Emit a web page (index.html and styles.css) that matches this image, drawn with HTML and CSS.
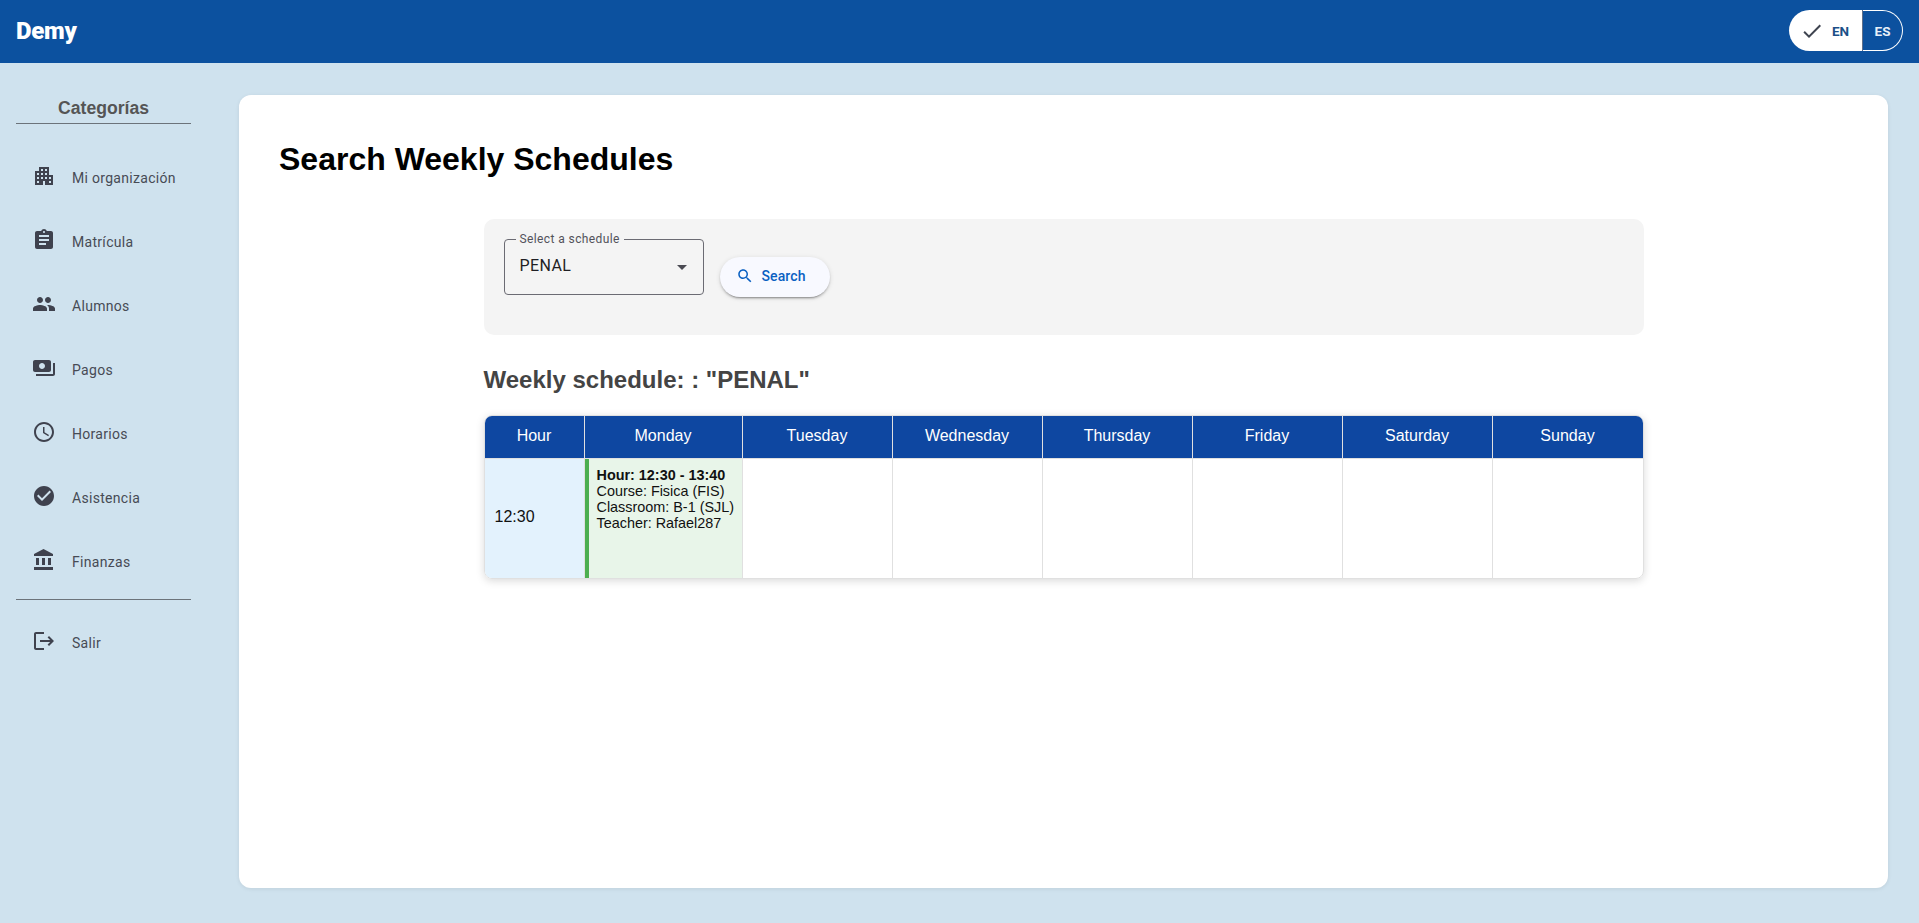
FILE: index.html
```html
<!DOCTYPE html>
<html lang="en">
<head>
  <meta charset="UTF-8">
  <title>Demy - Search Weekly Schedules</title>
  <link rel="stylesheet" href="styles.css">
</head>
<body>

<header class="topbar">
  <div class="logo">Demy</div>
  <div class="lang-toggle">
    <div class="lang-btn lang-on">
      <svg class="lang-check" viewBox="0 0 24 24"><path d="M9 16.17L4.83 12l-1.42 1.41L9 19 21 7l-1.41-1.41z"/></svg>
      <span>EN</span>
    </div>
    <div class="lang-btn lang-off">ES</div>
  </div>
</header>

<div class="layout">
  <aside class="sidebar">
    <h3 class="side-title">Categorías</h3>
    <nav class="side-list">
      <a class="side-item">
        <svg class="side-icon" viewBox="0 0 24 24"><path d="M17 11V3H7v4H3v14h8v-4h2v4h8V11h-4zM7 19H5v-2h2v2zm0-4H5v-2h2v2zm0-4H5V9h2v2zm4 4H9v-2h2v2zm0-4H9V9h2v2zm0-4H9V5h2v2zm4 8h-2v-2h2v2zm0-4h-2V9h2v2zm0-4h-2V5h2v2zm4 12h-2v-2h2v2zm0-4h-2v-2h2v2z"/></svg>
        <span>Mi organización</span>
      </a>
      <a class="side-item">
        <svg class="side-icon" viewBox="0 0 24 24"><path d="M19 3h-4.18C14.4 1.84 13.3 1 12 1c-1.3 0-2.4.84-2.82 2H5c-1.1 0-2 .9-2 2v14c0 1.1.9 2 2 2h14c1.1 0 2-.9 2-2V5c0-1.1-.9-2-2-2zm-7 0c.55 0 1 .45 1 1s-.45 1-1 1-1-.45-1-1 .45-1 1-1zm2 14H7v-2h7v2zm3-4H7v-2h10v2zm0-4H7V7h10v2z"/></svg>
        <span>Matrícula</span>
      </a>
      <a class="side-item">
        <svg class="side-icon" viewBox="0 0 24 24"><path d="M16 11c1.66 0 2.99-1.34 2.99-3S17.66 5 16 5c-1.66 0-3 1.34-3 3s1.34 3 3 3zm-8 0c1.66 0 2.99-1.34 2.99-3S9.66 5 8 5C6.34 5 5 6.34 5 8s1.34 3 3 3zm0 2c-2.33 0-7 1.17-7 3.5V19h14v-2.5c0-2.33-4.67-3.5-7-3.5zm8 0c-.29 0-.62.02-.97.05 1.16.84 1.97 1.97 1.97 3.45V19h6v-2.5c0-2.33-4.67-3.5-7-3.5z"/></svg>
        <span>Alumnos</span>
      </a>
      <a class="side-item">
        <svg class="side-icon" viewBox="0 0 24 24"><path d="M19 14V6c0-1.1-.9-2-2-2H3c-1.1 0-2 .9-2 2v8c0 1.1.9 2 2 2h14c1.1 0 2-.9 2-2zm-9-1c-1.66 0-3-1.34-3-3s1.34-3 3-3 3 1.34 3 3-1.34 3-3 3zm13-6v11c0 1.1-.9 2-2 2H4v-2h17V7h2z"/></svg>
        <span>Pagos</span>
      </a>
      <a class="side-item">
        <svg class="side-icon" viewBox="0 0 24 24"><path d="M11.99 2C6.47 2 2 6.48 2 12s4.47 10 9.99 10C17.52 22 22 17.52 22 12S17.52 2 11.99 2zM12 20c-4.42 0-8-3.58-8-8s3.58-8 8-8 8 3.58 8 8-3.58 8-8 8zm.5-13H11v6l5.25 3.15.75-1.23-4.5-2.67z"/></svg>
        <span>Horarios</span>
      </a>
      <a class="side-item">
        <svg class="side-icon" viewBox="0 0 24 24"><path d="M12 2C6.48 2 2 6.48 2 12s4.48 10 10 10 10-4.48 10-10S17.52 2 12 2zm-2 15l-5-5 1.41-1.41L10 14.17l7.59-7.59L19 8l-9 9z"/></svg>
        <span>Asistencia</span>
      </a>
      <a class="side-item">
        <svg class="side-icon" viewBox="0 0 24 24"><path d="M4 10v7h3v-7H4zm6 0v7h3v-7h-3zM2 22h19v-3H2v3zm14-12v7h3v-7h-3zm-4.5-9L2 6v2h19V6l-9.5-5z"/></svg>
        <span>Finanzas</span>
      </a>
    </nav>
    <div class="side-line"></div>
    <a class="side-item">
      <svg class="side-icon" viewBox="0 0 24 24"><path d="M17 7l-1.41 1.41L18.17 11H8v2h10.17l-2.58 2.58L17 17l5-5zM4 5h8V3H4c-1.1 0-2 .9-2 2v14c0 1.1.9 2 2 2h8v-2H4V5z"/></svg>
      <span>Salir</span>
    </a>
  </aside>

  <main class="card">
    <h1 class="page-title">Search Weekly Schedules</h1>
    <div class="content">
      <div class="search-panel">
        <div class="select-box">
          <span class="select-label">Select a schedule</span>
          <span class="select-value">PENAL</span>
          <span class="select-arrow"></span>
        </div>
        <button class="search-btn">
          <svg class="search-icon" viewBox="0 0 24 24"><path d="M15.5 14h-.79l-.28-.27C15.41 12.59 16 11.11 16 9.5 16 5.91 13.09 3 9.5 3S3 5.91 3 9.5 5.91 16 9.5 16c1.61 0 3.09-.59 4.23-1.57l.27.28v.79l5 4.99L20.49 19l-4.99-5zm-6 0C7.01 14 5 11.99 5 9.5S7.01 5 9.5 5 14 7.01 14 9.5 11.99 14 9.5 14z"/></svg>
          Search
        </button>
      </div>

      <h2 class="schedule-title">Weekly schedule: : "PENAL"</h2>

      <div class="table-wrap">
        <table class="schedule">
          <colgroup>
            <col class="col-hour">
            <col class="col-monday">
            <col><col><col><col><col><col>
          </colgroup>
          <thead>
            <tr>
              <th>Hour</th>
              <th>Monday</th>
              <th>Tuesday</th>
              <th>Wednesday</th>
              <th>Thursday</th>
              <th>Friday</th>
              <th>Saturday</th>
              <th>Sunday</th>
            </tr>
          </thead>
          <tbody>
            <tr>
              <td class="hour-cell">12:30</td>
              <td class="class-cell">
                <strong>Hour: 12:30 - 13:40</strong><br>
                Course: Fisica (FIS)<br>
                Classroom: B-1 (SJL)<br>
                Teacher: Rafael287
              </td>
              <td></td><td></td><td></td><td></td><td></td><td></td>
            </tr>
          </tbody>
        </table>
      </div>
    </div>
  </main>
</div>

</body>
</html>
```

FILE: styles.css
```css
* {
  box-sizing: border-box;
}

body {
  margin: 0;
  height: 923px;
  display: flex;
  flex-direction: column;
  background: #cfe2ee;
  font-family: Roboto, sans-serif;
  overflow: hidden;
}

.topbar {
  height: 63px;
  flex: none;
  display: flex;
  align-items: center;
  justify-content: space-between;
  padding: 0 16px;
  background: #0c519f;
}

.logo {
  padding-bottom: 2px;
  color: #fff;
  font-size: 24px;
  font-weight: 900;
  letter-spacing: -0.3px;
}

.lang-toggle {
  display: flex;
  height: 41px;
  margin-bottom: 2px;
  color: #1c4f87;
  font-size: 13.5px;
  font-weight: 700;
}

.lang-btn {
  display: flex;
  align-items: center;
}

.lang-on {
  width: 74px;
  padding-left: 11px;
  gap: 8px;
  background: #fff;
  border-radius: 21px 0 0 21px;
  border-right: 1px solid #5f6f8a;
}

.lang-check {
  width: 24px;
  height: 24px;
  fill: #3f4450;
}

.lang-off {
  width: 40px;
  justify-content: center;
  color: #e8f0f8;
  border: 1px solid #fff;
  border-left: none;
  border-radius: 0 21px 21px 0;
}

.layout {
  flex: 1;
  display: flex;
  min-height: 0;
}

.sidebar {
  width: 239px;
  flex: none;
  padding: 32px 48px 0 16px;
}

.side-title {
  margin: 0;
  height: 29px;
  padding-top: 3px;
  border-bottom: 1px solid #6c737a;
  text-align: center;
  color: #555;
  font-family: "Liberation Sans", Arial, sans-serif;
  font-size: 17.6px;
  font-weight: 700;
  line-height: 21px;
}

.side-list {
  padding-top: 21px;
}

.side-item {
  height: 64px;
  display: flex;
  align-items: center;
  padding-left: 16px;
  gap: 16px;
  color: #474b55;
  font-size: 14px;
  letter-spacing: 0.3px;
}

.side-item span {
  padding-top: 1px;
}

.side-icon {
  width: 24px;
  height: 24px;
  flex: none;
  margin-top: -2px;
  fill: #3f424e;
}

.side-line {
  height: 1px;
  margin-top: 6px;
  margin-bottom: 10px;
  background: #6c737a;
}

.card {
  width: 1649px;
  margin: 32px 0 35px;
  padding: 40px;
  background: #fff;
  border-radius: 12px;
  box-shadow: 0 1px 4px rgba(0,0,0,0.08);
}

.page-title {
  margin: 0;
  color: #000;
  font-family: "Liberation Sans", Arial, sans-serif;
  font-size: 32px;
  font-weight: 700;
  line-height: 48px;
}

.content {
  width: 1160px;
  margin: 36px auto 0;
}

.search-panel {
  height: 116px;
  display: flex;
  align-items: flex-start;
  gap: 16px;
  padding: 20px;
  background: #f4f4f4;
  border-radius: 10px;
}

.select-box {
  position: relative;
  width: 200px;
  height: 56px;
  display: flex;
  align-items: center;
  padding: 0 15px;
  border: 1px solid #6b6b73;
  border-radius: 4px;
  color: #1f1f24;
  font-size: 16px;
}

.select-value {
  margin-top: -3px;
  letter-spacing: 0.4px;
}

.select-label {
  position: absolute;
  top: -8px;
  left: 11px;
  padding: 0 4px;
  background: #f4f4f4;
  color: #52525a;
  font-size: 12px;
  line-height: 14px;
  letter-spacing: 0.4px;
}

.select-arrow {
  position: absolute;
  right: 16px;
  top: 25px;
  border-left: 5px solid transparent;
  border-right: 5px solid transparent;
  border-top: 5px solid #4a4a52;
}

.search-btn {
  height: 40px;
  width: 110px;
  margin-top: 18px;
  padding: 0 0 2px 16px;
  display: flex;
  align-items: center;
  gap: 8px;
  border: none;
  border-radius: 20px;
  background: #f8f9ff;
  color: #0a60c2;
  font-family: Roboto, sans-serif;
  font-size: 14px;
  font-weight: 500;
  letter-spacing: 0.1px;
  box-shadow: 0 3px 1px -2px rgba(0,0,0,0.2), 0 2px 2px rgba(0,0,0,0.14), 0 1px 5px rgba(0,0,0,0.12);
}

.search-icon {
  width: 18px;
  height: 18px;
  fill: #0a60c2;
}

.schedule-title {
  margin: 29px 0 19px;
  color: #444;
  font-family: "Liberation Sans", Arial, sans-serif;
  font-size: 24px;
  font-weight: 700;
  line-height: 32px;
}

.table-wrap {
  border: 1px solid #e0e0e0;
  border-radius: 8px;
  overflow: hidden;
  box-shadow: 0 2px 8px rgba(0,0,0,0.15);
}

.schedule {
  width: 100%;
  table-layout: fixed;
  border-collapse: separate;
  border-spacing: 0;
  font-family: "Liberation Sans", Arial, sans-serif;
  font-size: 16px;
}

.col-hour {
  width: 100px;
}

.col-monday {
  width: 158px;
}

.schedule th {
  height: 43px;
  padding: 0 0 2px;
  background: #0e47a1;
  color: #fff;
  font-weight: 400;
  border-right: 1px solid #e0e0e0;
  border-bottom: 1px solid #e0e0e0;
}

.schedule td {
  height: 119px;
  padding: 0;
  border-right: 1px solid #e0e0e0;
}

.schedule th:last-child,
.schedule td:last-child {
  border-right: none;
}

.schedule .hour-cell {
  padding: 0 0 3px 10px;
  background: #e3f2fd;
  color: #111;
}

.schedule .class-cell {
  padding: 8px 0 8px 8px;
  vertical-align: top;
  background: #e8f5e9;
  border-left: 4px solid #4caf50;
  color: #111;
  font-size: 14.4px;
  line-height: 16px;
}
```
